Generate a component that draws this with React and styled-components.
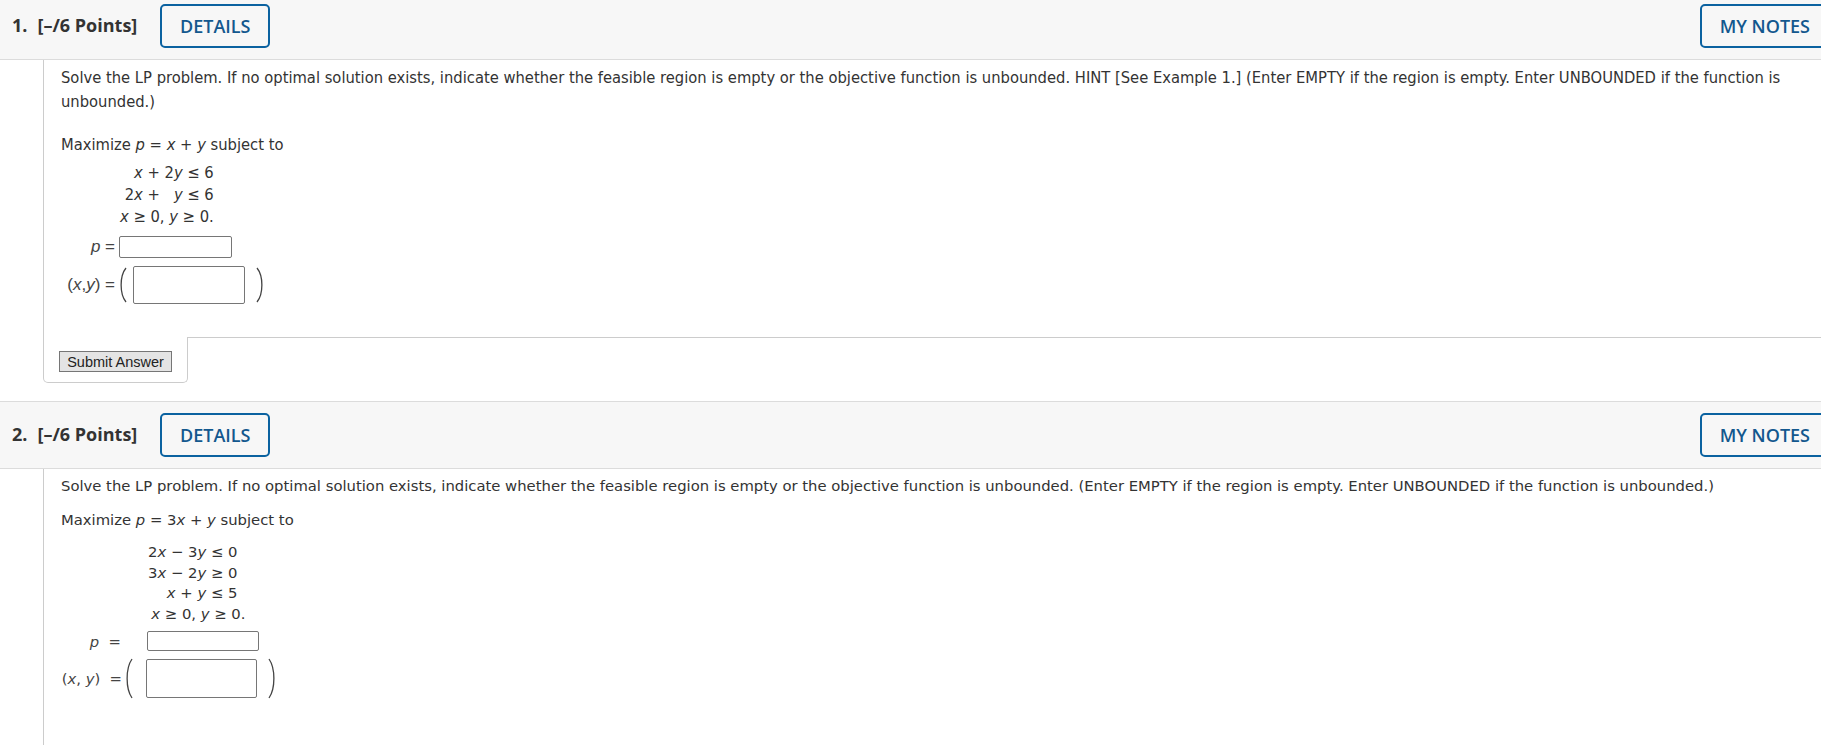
import React from "react"
import styled, { createGlobalStyle } from "styled-components"

const GlobalStyle = createGlobalStyle`
  body {
    margin: 0;
    background: #fff;
    overflow: hidden;
    font-family: "DejaVu Sans", Verdana, sans-serif;
    color: #333;
  }
`

const Paren = ({ right, h = 36 }) => (
  <ParenSvg width="10" height={h} viewBox={`0 0 10 ${h}`}>
    <path
      d={
        right
          ? `M2 1 C 8.5 ${h * 0.25}, 8.5 ${h * 0.75}, 2 ${h - 1}`
          : `M8 1 C 1.5 ${h * 0.25}, 1.5 ${h * 0.75}, 8 ${h - 1}`
      }
      fill="none"
      stroke="#444"
      strokeWidth="1.3"
    />
  </ParenSvg>
)

const Header = ({ num }) => (
  <HeaderBar>
    <Points>
      <span className="num">{num}.</span>
      <span>[–/6 Points]</span>
    </Points>
    <OutlineButton>DETAILS</OutlineButton>
    <Spacer />
    <OutlineButton $edge>MY NOTES</OutlineButton>
  </HeaderBar>
)

const App = () => {
  return (
    <Page>
      <GlobalStyle />
      <Header num={1} />
      <Body $q1>
        <Prompt>
          <Line>
            Solve the LP problem. If no optimal solution exists, indicate
            whether the feasible region is empty or the objective function is
            unbounded. HINT [See Example 1.] (Enter EMPTY if the region is
            empty. Enter UNBOUNDED if the function is
          </Line>
          <Line>unbounded.)</Line>
        </Prompt>
        <Objective $gap={19}>
          Maximize <i>p</i> = <i>x</i> + <i>y</i> subject to
        </Objective>
        <Constraints $left={59} $lh={22} $gap={5}>
          <Row>
            <i>x</i> + 2<i>y</i> ≤ 6
          </Row>
          <Row>
            2<i>x</i> +&nbsp;&nbsp; <i>y</i> ≤ 6
          </Row>
          <Row>
            <i>x</i> ≥ 0, <i>y</i> ≥ 0.
          </Row>
        </Constraints>
        <AnswerRow $gap={8}>
          <Label $w={54} $arial>
            <i>p</i> =
          </Label>
          <Field $w={113} $h={22} $ml={4} />
        </AnswerRow>
        <AnswerRow $gap={8}>
          <Label $w={54} $arial>
            (<i>x</i>,<i>y</i>) =
          </Label>
          <ParenSlot $ml={3}>
            <Paren />
          </ParenSlot>
          <Field $w={112} $h={38} $ml={5} />
          <ParenSlot $ml={10}>
            <Paren right />
          </ParenSlot>
        </AnswerRow>
        <BodyEnd />
      </Body>
      <Footer>
        <SubmitTab>
          <SubmitButton>Submit Answer</SubmitButton>
        </SubmitTab>
        <FooterLine />
      </Footer>

      <Header num={2} />
      <Body $tall>
        <Prompt $plain>
          Solve the LP problem. If no optimal solution exists, indicate whether
          the feasible region is empty or the objective function is unbounded.
          (Enter EMPTY if the region is empty. Enter UNBOUNDED if the function
          is unbounded.)
        </Prompt>
        <Objective $gap={12} $plain>
          Maximize <i>p</i> = 3<i>x</i> + <i>y</i> subject to
        </Objective>
        <Constraints $left={87} $lh={20.5} $gap={11} $plain>
          <Row $pad={8}>
            2<i>x</i> − 3<i>y</i> ≤ 0
          </Row>
          <Row $pad={8}>
            3<i>x</i> − 2<i>y</i> ≥ 0
          </Row>
          <Row $pad={8}>
            <i>x</i> + <i>y</i> ≤ 5
          </Row>
          <Row>
            <i>x</i> ≥ 0, <i>y</i> ≥ 0.
          </Row>
        </Constraints>
        <AnswerRow $gap={7}>
          <Label $w={60}>
            <i>p</i>&nbsp; =
          </Label>
          <Field $w={112} $h={20} $ml={26} />
        </AnswerRow>
        <AnswerRow $gap={7}>
          <Label $w={61}>
            (<i>x</i>, <i>y</i>)&nbsp; =
          </Label>
          <ParenSlot $ml={2}>
            <Paren h={41} />
          </ParenSlot>
          <Field $w={111} $h={39} $ml={12} />
          <ParenSlot $ml={10}>
            <Paren right h={41} />
          </ParenSlot>
        </AnswerRow>
      </Body>
    </Page>
  )
}

var Page = styled.div`
  margin-top: -8px;
`

var HeaderBar = styled.div`
  display: flex;
  align-items: center;
  height: 66px;
  box-sizing: content-box;
  padding-left: 12px;
  background: #f7f7f7;
  border-top: 1px solid #dcdcdc;
  border-bottom: 1px solid #dcdcdc;
`

var Points = styled.div`
  font-family: "Open Sans", sans-serif;
  font-weight: 700;
  font-size: 18px;
  color: #333;
  width: 148px;
  margin-top: -2px;
  white-space: nowrap;
  .num {
    margin-right: 10px;
  }
`

var OutlineButton = styled.button`
  height: 44px;
  padding: 0 18px;
  margin-top: -1px;
  margin-right: ${(p) => (p.$edge ? "-9px" : "0")};
  background: transparent;
  border: 2px solid #0b62a0;
  border-radius: 5px;
  font-family: "Open Sans", sans-serif;
  font-weight: 600;
  font-size: 18px;
  color: #13588e;
  white-space: nowrap;
`

var Spacer = styled.div`
  flex: 1;
`

var Body = styled.div`
  margin-left: 43px;
  border-left: 1px solid #cccccc;
  padding: 6px 8px 0 17px;
  min-height: ${(p) => (p.$tall ? "300px" : "0")};
  font-family: ${(p) =>
    p.$q1
      ? '"DejaVu Sans Condensed", "DejaVu Sans", sans-serif'
      : '"DejaVu Sans", sans-serif'};
  font-size: ${(p) => (p.$q1 ? "16.4px" : "14.8px")};
  color: #333;
`

var Prompt = styled.div`
  line-height: ${(p) => (p.$plain ? "22px" : "24px")};
`

var Line = styled.div`
  white-space: nowrap;
`

var Objective = styled.div`
  margin-top: ${(p) => p.$gap}px;
  line-height: ${(p) => (p.$plain ? "22px" : "24px")};
`

var Constraints = styled.div`
  display: inline-block;
  margin-left: ${(p) => p.$left}px;
  margin-top: ${(p) => p.$gap}px;
  line-height: ${(p) => p.$lh}px;
  text-align: right;
`

var Row = styled.div`
  white-space: nowrap;
  padding-right: ${(p) => p.$pad || 0}px;
`

var AnswerRow = styled.div`
  display: flex;
  align-items: center;
  margin-top: ${(p) => p.$gap}px;
`

var Label = styled.div`
  width: ${(p) => p.$w}px;
  text-align: right;
  white-space: nowrap;
  font-family: ${(p) =>
    p.$arial ? '"Liberation Sans", Arial, sans-serif' : "inherit"};
  font-size: ${(p) => (p.$arial ? "17px" : "inherit")};
  color: #444;
`

var Field = styled.input`
  box-sizing: border-box;
  width: ${(p) => p.$w}px;
  height: ${(p) => p.$h}px;
  margin: 0 0 0 ${(p) => p.$ml}px;
  padding: 0;
  border: 1px solid #767676;
  border-radius: 2px;
  background: #fff;
`

var ParenSlot = styled.div`
  display: flex;
  margin-left: ${(p) => p.$ml}px;
`

var ParenSvg = styled.svg`
  display: block;
`

var BodyEnd = styled.div`
  height: 33px;
`

var Footer = styled.div`
  display: flex;
  margin-left: 43px;
  margin-bottom: 18px;
`

var SubmitTab = styled.div`
  box-sizing: border-box;
  width: 145px;
  border: 1px solid #cccccc;
  border-top: none;
  border-radius: 0 0 5px 5px;
  padding: 14px 0 10px 15px;
`

var FooterLine = styled.div`
  flex: 1;
  border-top: 1px solid #cccccc;
`

var SubmitButton = styled.button`
  display: block;
  width: 113px;
  height: 21px;
  padding: 0;
  background: #e4e4e4;
  border: 1px solid #767676;
  border-radius: 0;
  font-family: "Liberation Sans", Arial, sans-serif;
  font-size: 14.5px;
  color: #222;
  white-space: nowrap;
`

export default App
